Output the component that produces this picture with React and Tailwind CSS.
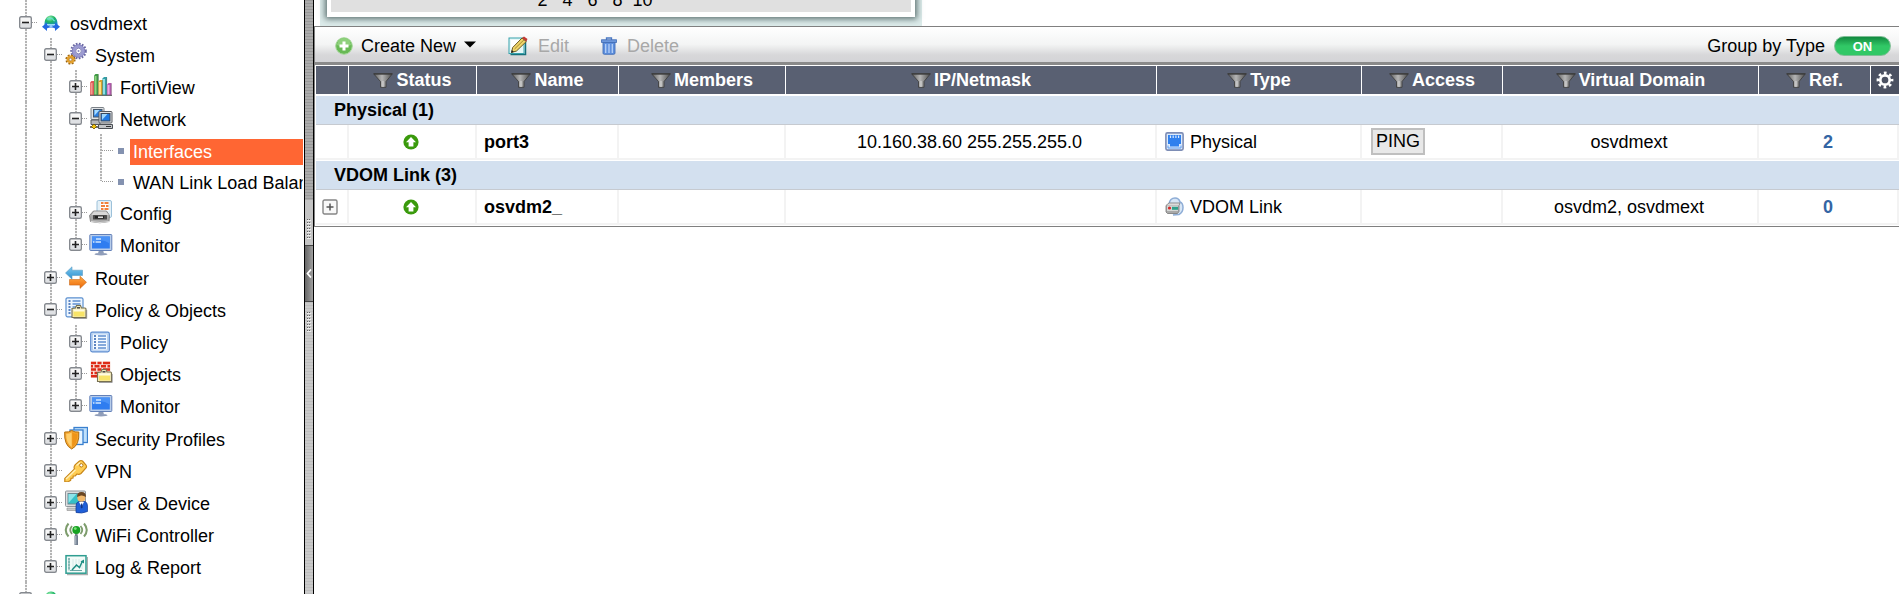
import React from "react";

/* ---------- Tree icons (24x24 boxes) ---------- */

function Svg({ children, w = 24, h = 24 }) {
  return (
    <svg width={w} height={h} viewBox={`0 0 ${w} ${h}`} className="shrink-0" aria-hidden="true">
      {children}
    </svg>
  );
}

function DomainIcon() {
  return (
    <Svg>
      <defs>
        <radialGradient id="globe" cx="0.4" cy="0.25" r="0.8">
          <stop offset="0" stopColor="#9df0b0" />
          <stop offset="0.45" stopColor="#1fb565" />
          <stop offset="1" stopColor="#1b86d8" />
        </radialGradient>
      </defs>
      <path d="M5.500 16C5 9 8 5.500 12 5.500S19 9 18.500 16Z" fill="url(#globe)" />
      <path d="M8 8.500c2 2 3-1 5 0s1 3 3 2" stroke="#5fe0d0" strokeWidth="1.200" fill="none" />
      <path d="M7 14h10v2.500l-5-1.500-5 1.500Z" fill="#a5dcf5" />
      <path d="M3 16.700 8 12.500v2.500c2 1.700 6 1.700 8 0v-2.500l5 4.200-5 4.200v-2.400c-2-1.200-6-1.200-8 0v2.400Z" fill="#2468e0" />
      <circle cx="12" cy="16" r="1.500" fill="#8fc6ff" />
    </Svg>
  );
}

function GearsIcon() {
  return (
    <Svg>
      <circle cx="14.500" cy="9" r="7.200" fill="none" stroke="#6a68a4" strokeWidth="2.200" strokeDasharray="1.700 1.400" />
      <circle cx="14.500" cy="9" r="4.700" fill="none" stroke="#9c9bd2" strokeWidth="3.600" />
      <circle cx="14.500" cy="9" r="6.300" fill="none" stroke="#7a79b4" strokeWidth="0.700" />
      <circle cx="14.500" cy="9" r="2.800" fill="#fff" stroke="#6a68a4" strokeWidth="0.800" />
      <circle cx="14.500" cy="9" r="1" fill="#8482bd" />
      <circle cx="6.500" cy="17.500" r="4" fill="none" stroke="#9c6410" strokeWidth="2.200" strokeDasharray="1.800 1.350" />
      <circle cx="6.500" cy="17.500" r="2.700" fill="none" stroke="#e3a02c" strokeWidth="2.400" />
      <circle cx="6.500" cy="17.500" r="1.300" fill="#fff" stroke="#9c6410" strokeWidth="0.700" />
    </Svg>
  );
}

function BarsIcon() {
  const bars = [
    [1, 7, "#e25858", "#f29a8e"],
    [5, 0, "#3f9a44", "#8fd480"],
    [9.500, 6, "#dba02a", "#ffdf80"],
    [13.500, 3, "#33a0a8", "#8edfe4"],
    [18, 9, "#b858b0", "#eeaae6"],
  ];
  return (
    <Svg>
      {bars.map(([x, y, dark, light]) => (
        <g key={x}>
          <path d={`M${x} ${y + 1.500}L${x + 1.500} ${y}h3V21.500h-4.500Z`} fill={dark} />
          <rect x={x + 0.500} y={y + 2} width="2" height={18.500 - y} fill={light} />
          <path d={`M${x + 4.200} ${y + 0.500}V21.500`} stroke="#666" strokeOpacity="0.500" strokeWidth="0.900" />
        </g>
      ))}
      <path d="M1 21.300h22" stroke="#555" strokeWidth="1" />
    </Svg>
  );
}

function NetworkIcon() {
  return (
    <Svg>
      <rect x="2" y="1.500" width="13" height="12" rx="1" fill="#e2e4e6" stroke="#7c8288" />
      <rect x="4.500" y="3.500" width="8.500" height="7.500" fill="#2a7ee0" stroke="#44566a" />
      <path d="m5.500 9.500 5-5.500h-5Z" fill="#a8dcff" />
      <path d="M2 14h9v4.500H2Z" fill="#b6b8ba" stroke="#55585c" />
      <rect x="10" y="5.500" width="13" height="11.500" rx="1" fill="#e2e4e6" stroke="#54585e" />
      <rect x="12" y="7.500" width="9" height="7.500" fill="#1e78e2" stroke="#38485c" />
      <path d="m13 14 5.500-6H13Z" fill="#9cd6ff" />
      <path d="M9.500 18.500h14v4h-14Z" fill="#c3c5c8" stroke="#4c5056" />
      <path d="M17 20.500h5" stroke="#333" />
      <path d="M1 21h8" stroke="#333" strokeWidth="1.400" />
      <path d="m2.500 20.500 2.500-2.500 2.500 2.500L5 23Z" fill="#f1c40f" stroke="#6b5200" strokeWidth="0.800" />
    </Svg>
  );
}

function ConfigIcon() {
  return (
    <Svg>
      <rect x="8" y="0.500" width="14.500" height="17" rx="1.500" fill="#e4f0f7" stroke="#9cc1da" />
      <rect x="11.500" y="2" width="8" height="9.500" fill="#fff" />
      <path d="M12 3h2.500M15.500 3h4M12 6h4M17 6h2.500M12 9h2.500M15.500 9h4" stroke="#f0803c" strokeWidth="1.800" />
      <path d="M4.500 11h13l3 4.500-.5 6q-9 2.500-18.500 0l-1-6Z" fill="#a8a8a8" stroke="#777" strokeWidth="0.800" />
      <path d="M5 11.500h12l3 3.500H2.500Z" fill="#d8d8d8" />
      <rect x="4" y="15" width="14" height="4.500" rx="0.500" fill="#4b4b4b" />
      <path d="M6 16h9v2.500H6Z" fill="#222" />
      <path d="M9 17.200h5" stroke="#ddd" strokeWidth="1.600" />
      <path d="M2 21.500q9 2 18 0" stroke="#ddd" fill="none" />
    </Svg>
  );
}

function MonitorIcon() {
  return (
    <Svg>
      <path d="M10 18h4l1 3.500H9Z" fill="#8d9cb8" />
      <ellipse cx="12" cy="22.200" rx="6.500" ry="1.300" fill="#8f9db9" />
      <rect x="0.800" y="2.500" width="22" height="16" rx="0.800" fill="#b8cdea" stroke="#6481b8" />
      <rect x="3" y="4.500" width="17.800" height="12" fill="#2f7df0" />
      <path d="M3 10.500q9-5 17.800 1V4.500H3Z" fill="#4a92f6" />
      <path d="M7 7h5M4 10h1.500M6.500 10H12" stroke="#cfe6ff" strokeWidth="1.500" />
    </Svg>
  );
}

function RouterIcon() {
  return (
    <Svg>
      <defs>
        <linearGradient id="lt" x1="0" y1="0" x2="0" y2="1">
          <stop offset="0" stopColor="#7cc8ee" />
          <stop offset="1" stopColor="#2c8fce" />
        </linearGradient>
        <linearGradient id="rt" x1="0" y1="0" x2="0" y2="1">
          <stop offset="0" stopColor="#ffac45" />
          <stop offset="1" stopColor="#ec6708" />
        </linearGradient>
      </defs>
      <path d="M1.500 8 8 1.800v3.400h10.500v5.300H8v3.700Z" fill="url(#lt)" stroke="#5d9cc4" strokeWidth="0.600" />
      <path d="M22.500 17.300 16 11.200v3.300H5.500v5.600H16v3.300Z" fill="url(#rt)" stroke="#c76a1c" strokeWidth="0.600" />
    </Svg>
  );
}

function ListLines({ x = 0, y = 0 }) {
  return (
    <g transform={`translate(${x} ${y})`}>
      <path d="M0 0h2M0 3h2M0 6h2M0 9h2M0 12h2" stroke="#2a5fae" strokeWidth="1.400" />
      <path d="M4 0h8M4 3h8M4 6h8M4 9h8M4 12h8" stroke="#5f8fd0" strokeWidth="1.300" />
    </g>
  );
}

function FolderShape({ x = 0, y = 0 }) {
  return (
    <g transform={`translate(${x} ${y})`}>
      <path d="M0.500 3.500 4 3l1-2.500h4L10 3h3.500q1 0 1 1v8.500h-14Z" fill="#f4ecc0" stroke="#77704f" strokeWidth="1.100" />
      <path d="M5.500 2.800h3" stroke="#444" strokeWidth="1.500" />
      <rect x="2" y="5" width="11" height="6.500" fill="#f8e468" />
      <path d="M2 5.500h11" stroke="#fffbe0" strokeWidth="2" />
      <path d="M15.200 5v8.500H2" stroke="#77777a" strokeOpacity="0.700" fill="none" />
    </g>
  );
}

function PolicyObjectsIcon() {
  return (
    <Svg>
      <rect x="2" y="0.800" width="17" height="19" rx="1.500" fill="#eef6ff" stroke="#5b8fcf" strokeWidth="1.200" />
      <ListLines x={4.500} y={4} />
      <FolderShape x={7.500} y={8} />
    </Svg>
  );
}

function PolicyIcon() {
  return (
    <Svg>
      <rect x="1.700" y="3.200" width="18.600" height="19.600" rx="1.500" fill="#cfe2f8" stroke="#5b8bcf" strokeWidth="1.200" />
      <rect x="3.500" y="5" width="15" height="16" fill="#f4faff" stroke="#9fc0e8" strokeWidth="0.600" />
      <ListLines x={5} y={7} />
    </Svg>
  );
}

function ObjectsIcon() {
  return (
    <Svg>
      <rect x="1.500" y="0.500" width="20" height="16" fill="#f7dcd4" />
      <path d="M2 2h5M8.500 2h4M14 2h7M2 5.300h2M5.500 5.300h5M12 5.300h5M18.500 5.300h2.500M2 8.600h5M8.500 8.600h4M14 8.600h7M2 11.900h2M5.500 11.900h5M2 15.200h6" stroke="#dd2a16" strokeWidth="2.500" />
      <FolderShape x={8} y={8} />
    </Svg>
  );
}

function SecurityIcon() {
  return (
    <Svg>
      <rect x="10" y="1.500" width="13.500" height="15" fill="#bfe0fb" stroke="#3a80cf" strokeWidth="1.300" />
      <rect x="6" y="4" width="13" height="14.500" fill="#e8f5ff" stroke="#3a80cf" strokeWidth="1.300" />
      <path d="M7.700 4.500q-3 2-7 1.500Q-0.200 19 7.700 23 15.700 19 14.800 6q-4 .5-7.100-1.500Z" fill="#f5a52e" stroke="#b3700f" strokeWidth="1" />
      <path d="M7.700 6.500q-2.700 1.500-5.500 1.300Q2 17 7.700 21Z" fill="#ffcf6d" />
      <path d="M8.300 6.500q2.700 1.500 5 1.300Q13.700 17 8.300 21Z" fill="#ee9418" />
    </Svg>
  );
}

function KeyIcon() {
  return (
    <Svg>
      <path d="M11 7 15.500 3q1.500-1 3 0l3.500 4q1 1.500 0 3l-5 5.500q-2 1.500-4 .5l-1.800 1.800-2 .2-.2 2-2 .3-.4 2-2 1.200-3.800.5L.800 20.500 10.500 11q-1-2 .5-4Z" fill="#ffce55" stroke="#c98718" strokeWidth="1.200" />
      <path d="M12.500 7.500 16 4.500M2 21l9.500-9.200" stroke="#fff0b8" strokeWidth="1.500" />
      <circle cx="17.300" cy="7.300" r="1.700" fill="#fff" stroke="#b87812" />
    </Svg>
  );
}

function UserIcon() {
  return (
    <Svg>
      <rect x="1.500" y="1" width="20" height="15.500" rx="1" fill="#dcdedf" stroke="#8f959b" />
      <rect x="4" y="3.500" width="13" height="10.500" fill="#35bfc6" stroke="#6c8892" />
      <path d="m4.500 13 8-9h-8Z" fill="#8ce4e8" />
      <path d="M3 18h9v2.500H3Z" fill="#c6c8ca" stroke="#999" strokeWidth="0.700" />
      <path d="M12 22.500V16q0-4 3-4.500h6q2.500 1 2.500 4.500v5.500q-6 2.500-11.500 1Z" fill="#1f5fd8" stroke="#123a92" strokeWidth="0.700" />
      <path d="m15 12 2.500 4.500L20 12Z" fill="#fff" />
      <path d="M17.200 13.500h1l.5 4-1 1-1-1Z" fill="#16357e" />
      <circle cx="17.300" cy="7.800" r="4" fill="#f1b96d" />
      <path d="M13 7q0-5 4.500-5T22 7q-3-2-5-1.500T13 7Z" fill="#6a4622" />
    </Svg>
  );
}

function WifiIcon() {
  return (
    <Svg>
      <path d="M4.500 1.500Q-1 8 4.500 14.500M20 1.500q5.500 6.500 0 13" stroke="#7d9c6c" strokeWidth="2" fill="none" />
      <path d="M8 4q-3.500 4 0 8M16.500 4q3.500 4 0 8" stroke="#7d9c6c" strokeWidth="1.800" fill="none" />
      <path d="M11 10.500h2.600V14H11Z" fill="#79838c" />
      <rect x="10.500" y="13.500" width="3.500" height="9.500" fill="#6f7c8e" />
      <path d="M11.800 14v8.500" stroke="#b5c0cc" />
      <circle cx="12.300" cy="8" r="4" fill="#17a323" />
      <circle cx="11.300" cy="6.600" r="1.400" fill="#7de07a" />
    </Svg>
  );
}

function LogIcon() {
  return (
    <Svg>
      <path d="M3 20.500h20.500V3" stroke="#777" strokeOpacity="0.600" strokeWidth="1.400" fill="none" />
      <rect x="2" y="1.700" width="20" height="17.500" fill="#f2fbf8" stroke="#2f9d91" strokeWidth="1.500" />
      <path d="M5 4v12.500M4 5h2M4 8h2M4 11h2M4 14h2M6 16.500h12" stroke="#5b9c9a" strokeWidth="0.900" />
      <path d="M9 5v9M12 5v9M15 5v5M18 10v5" stroke="#cfe6e2" strokeWidth="0.800" />
      <path d="m8 16 4.500-5 3 2.500L18.500 7" stroke="#1d8d82" strokeWidth="1.500" fill="none" />
      <path d="m16.500 7.500 3.500-2v4Z" fill="#1d8d82" />
    </Svg>
  );
}

/* ---------- Tree ---------- */

const tree = [
  {
    label: "osvdmext",
    Icon: DomainIcon,
    children: [
      {
        label: "System",
        Icon: GearsIcon,
        children: [
          { label: "FortiView", Icon: BarsIcon },
          {
            label: "Network",
            Icon: NetworkIcon,
            children: [
              { label: "Interfaces", leaf: true, selected: true },
              { label: "WAN Link Load Balancing", leaf: true },
            ],
          },
          { label: "Config", Icon: ConfigIcon },
          { label: "Monitor", Icon: MonitorIcon },
        ],
      },
      { label: "Router", Icon: RouterIcon },
      {
        label: "Policy & Objects",
        Icon: PolicyObjectsIcon,
        children: [
          { label: "Policy", Icon: PolicyIcon },
          { label: "Objects", Icon: ObjectsIcon },
          { label: "Monitor", Icon: MonitorIcon },
        ],
      },
      { label: "Security Profiles", Icon: SecurityIcon },
      { label: "VPN", Icon: KeyIcon },
      { label: "User & Device", Icon: UserIcon },
      { label: "WiFi Controller", Icon: WifiIcon },
      { label: "Log & Report", Icon: LogIcon },
    ],
  },
  { label: "", Icon: DomainIcon },
];

const dotsV = "w-[2px] bg-[repeating-linear-gradient(to_bottom,#b4b4b4_0_2px,#f4f4f4_2px_3px)]";
const dotsH = "h-[1px] bg-[repeating-linear-gradient(to_right,#999_0_1px,#fff_1px_2px)]";

function Guides({ guides }) {
  return guides.map((on, i) => (
    <span key={i} className="flex w-[25px] shrink-0 justify-center self-stretch">
      {on && <span className={dotsV} />}
    </span>
  ));
}

function Expander({ open, name }) {
  return (
    <button
      type="button"
      aria-label={`${open ? "Collapse" : "Expand"} ${name}`}
      className="block size-[13px] shrink-0"
    >
      <svg width="13" height="13" viewBox="0 0 13 13">
        <rect x="0.700" y="0.700" width="11.600" height="11.600" rx="1.500" fill="#f6f6f6" stroke="#85898f" strokeWidth="1.400" />
        <path d="M2 7h9v4H2Z" fill="#dfe1e4" />
        <path d={open ? "M3 6.500h7" : "M3 6.500h7M6.500 3v7"} stroke="#222" strokeWidth="1.600" />
      </svg>
    </button>
  );
}

function TreeNode({ node, guides, last }) {
  if (node.leaf) {
    return (
      <li className="flex h-[31px] items-end">
        <Guides guides={guides} />
        <span className="flex w-[25px] shrink-0 self-stretch pl-3">
          <span className={`${dotsV} ${last ? "h-4" : "h-full"}`} />
          <span className={`mt-4 w-[11px] ${dotsH}`} />
        </span>
        <span className="flex w-[17px] shrink-0 self-stretch pt-[14px] pl-[5px]">
          <span className="size-[6px] bg-[#8492b0]" />
        </span>
        <a
          href="#interfaces"
          className={`h-[26px] grow pl-[3px] text-lg leading-[26px] whitespace-nowrap ${
            node.selected ? "bg-[#ff6633] text-white" : "text-black"
          }`}
        >
          {node.label}
        </a>
      </li>
    );
  }
  const { Icon } = node;
  return (
    <li>
      <div className="flex h-8 items-center">
        <Guides guides={guides} />
        <span className="flex w-[25px] shrink-0 items-center self-stretch pl-[6px]">
          <span className="flex h-full w-[13px] flex-col items-center">
            <span className={`grow ${dotsV}`} />
            <Expander open={!!node.children} name={node.label} />
            <span className={`flex-1 ${last ? "" : dotsV}`} />
          </span>
          <span className={`w-[6px] ${dotsH}`} />
        </span>
        <span className="w-8 shrink-0 pl-[1px]">
          <Icon />
        </span>
        <a href="#node" className="pt-1 text-lg leading-7 whitespace-nowrap text-black">
          {node.label}
        </a>
      </div>
      {node.children && (
        <ul>
          {node.children.map((child, i) => (
            <TreeNode
              key={i}
              node={child}
              guides={[...guides, !last]}
              last={i === node.children.length - 1}
            />
          ))}
          {guides.length === 1 && (
            <li aria-hidden="true" className="flex h-[1px]">
              <Guides guides={[true, true]} />
            </li>
          )}
        </ul>
      )}
    </li>
  );
}

function Sidebar() {
  return (
    <nav aria-label="Navigation" className="w-[303px] shrink-0 overflow-hidden pl-[13px]">
      <div className="flex h-[6px]">
        <Guides guides={[true]} />
      </div>
      <ul>
        {tree.map((node, i) => (
          <TreeNode key={i} node={node} guides={[]} last={i === tree.length - 1} />
        ))}
      </ul>
    </nav>
  );
}

function Grip() {
  return (
    <svg width="4" height="21" viewBox="0 0 4 21" aria-hidden="true">
      <path d="M0 0.500h4M0 3.500h4M0 6.500h4M0 9.500h4M0 12.500h4M0 15.500h4M0 18.500h4" stroke="#666" strokeDasharray="1 1" />
      <path d="M0 1.500h4M0 4.500h4M0 7.500h4M0 10.500h4M0 13.500h4M0 16.500h4M0 19.500h4" stroke="#eee" />
    </svg>
  );
}

function Splitter() {
  return (
    <div className="ml-[1px] flex w-[10px] shrink-0 flex-col items-stretch border-x border-black bg-[repeating-linear-gradient(to_bottom,#989898_0_1px,#ababab_1px_3px)]">
      <div className="h-[200px] shrink-0" />
      <div className="flex h-[45px] shrink-0 items-end justify-center bg-[#c4c4c4] pb-[5px]">
        <Grip />
      </div>
      <button
        type="button"
        aria-label="Hide navigation"
        className="flex h-[57px] shrink-0 items-center justify-center border-y border-[#444] bg-linear-to-r from-[#666] to-[#a0a0a0]"
      >
        <svg width="6" height="9" viewBox="0 0 6 9">
          <path d="M5 0.500 1.500 4.500 5 8.500" stroke="#fff" strokeWidth="1.800" fill="none" />
        </svg>
      </button>
      <div className="flex grow items-start justify-center bg-[repeating-linear-gradient(to_bottom,#bdbdbd_0_1px,#c9c9c9_1px_3px)] pt-[10px]">
        <Grip />
      </div>
    </div>
  );
}

/* ---------- Toolbar ---------- */

function AddIcon() {
  return (
    <Svg w={18} h={18}>
      <circle cx="9" cy="9" r="8.300" fill="#68b955" stroke="#a5d899" />
      <path d="M2 8a7 7 0 0 1 14 0q-7 3-14 0Z" fill="#8ed07c" />
      <path d="M9 4.500v9M4.500 9h9" stroke="#fff" strokeWidth="3" />
    </Svg>
  );
}

function EditIcon() {
  return (
    <Svg w={20} h={20}>
      <path d="M2.500 18.500h15V4" stroke="#17707c" strokeWidth="1.500" fill="none" />
      <rect x="1" y="2" width="15" height="15.500" fill="#e6f7f7" stroke="#35a2ac" />
      <path d="M3 4h9L3 13Z" fill="#fff" />
      <path d="m3.500 16.500 1.200-5L14 2l4.300 3.500L8.500 15Z" fill="#f0d56a" stroke="#6c5a22" strokeWidth="1" />
      <path d="M6.500 13 16 3.800" stroke="#a58a30" />
      <path d="m14 2 2-1.500L19.500 3l-1.200 2.500Z" fill="#c33a34" />
      <path d="m3 17 .8-3 2 1.800Z" fill="#222" />
    </Svg>
  );
}

function TrashIcon() {
  return (
    <Svg w={16} h={18}>
      <path d="M5.500 3V1h5v2" fill="none" stroke="#4a78c2" strokeWidth="1.300" />
      <rect x="0.600" y="2.800" width="14.800" height="2.600" fill="#6f9ade" stroke="#446fb8" strokeWidth="0.900" />
      <path d="M2 5.500h12V16q0 1.300-1.300 1.300H3.300Q2 17.300 2 16Z" fill="#5f90de" stroke="#446fb8" strokeWidth="0.900" />
      <path d="M4.700 7v9M8 7v9M11.300 7v9" stroke="#b5d0f7" strokeWidth="1.300" />
    </Svg>
  );
}

function Toolbar() {
  return (
    <div className="flex h-[39px] items-center border-t border-b-[3px] border-t-[#808080] border-b-[#8a8a8a] bg-[linear-gradient(to_bottom,#fff_0%,#f3f4f4_50%,#d7d7d9_80%,#d4d4d7_100%)] pt-[2px] pr-2 pl-5 text-lg leading-6">
      <button type="button" className="flex items-center text-black">
        <AddIcon />
        <span className="ml-2">Create New</span>
        <svg width="12" height="7" viewBox="0 0 12 7" className="mb-[3px] ml-2" aria-hidden="true">
          <path d="M0 0.500h12L6 6.500Z" fill="#000" />
        </svg>
      </button>
      <button type="button" disabled className="ml-8 flex items-center text-[#a8a8a8]">
        <EditIcon />
        <span className="ml-[10px]">Edit</span>
      </button>
      <button type="button" disabled className="ml-8 flex items-center text-[#a8a8a8]">
        <TrashIcon />
        <span className="ml-[10px]">Delete</span>
      </button>
      <div className="grow" />
      <label htmlFor="group-by-type">Group by Type</label>
      <button
        id="group-by-type"
        type="button"
        role="switch"
        aria-checked="true"
        className="ml-[9px] flex h-5 w-[57px] items-center justify-center rounded-full border border-[#7fbf96] bg-linear-to-b from-[#128a40] to-[#31c866] to-50% pt-[3px] text-[13px] leading-4 font-bold text-white"
      >
        ON
      </button>
    </div>
  );
}

/* ---------- Table ---------- */

function Funnel() {
  return (
    <svg width="20" height="15" viewBox="0 0 20 15" className="shrink-0" aria-hidden="true">
      <defs>
        <linearGradient id="funnel" x1="0" y1="0" x2="1" y2="0">
          <stop offset="0" stopColor="#5c5c5c" />
          <stop offset="0.450" stopColor="#b4b4b4" />
          <stop offset="1" stopColor="#4a4a4a" />
        </linearGradient>
      </defs>
      <path d="M0.500 0.700h19L13 8.500V14.300H7.500V8.500Z" fill="url(#funnel)" stroke="#3f3f3f" strokeWidth="0.900" />
      <path d="M1 1h18" stroke="#3a3a3a" strokeWidth="1.200" />
      <path d="M10 8v6" stroke="#d0d0d0" strokeWidth="1.300" />
    </svg>
  );
}

function GearIcon() {
  return (
    <svg width="18" height="18" viewBox="0 0 18 18" aria-hidden="true">
      <circle cx="9" cy="9" r="7" fill="none" stroke="#fff" strokeWidth="2.800" strokeDasharray="2.700 2.798" strokeDashoffset="1.350" />
      <circle cx="9" cy="9" r="4.700" fill="none" stroke="#fff" strokeWidth="2.700" />
    </svg>
  );
}

function UpIcon() {
  return (
    <svg width="16" height="16" viewBox="0 0 16 16" className="mx-auto" role="img" aria-label="Up">
      <circle cx="8" cy="8" r="7.600" fill="#3a9a0c" />
      <path d="M8 3 13 8.200h-2.600V12.500H5.600V8.200H3Z" fill="#fff" />
    </svg>
  );
}

function PortIcon() {
  return (
    <Svg w={19} h={19}>
      <rect x="0.900" y="0.900" width="17.200" height="17.200" rx="1.500" fill="#dceafb" stroke="#7d8db5" strokeWidth="1.600" />
      <path d="M3 3h13v9h-2v2.500H5V12H3Z" fill="#2f80ee" />
      <path d="M5.500 3.500v2.500M8.200 3.500v2.500M10.900 3.500v2.500M13.600 3.500v2.500" stroke="#d6e8ff" strokeWidth="1.200" />
      <path d="M3 13.500v2.500h13v-2.500" stroke="#5f9cf0" strokeWidth="1" fill="none" />
    </Svg>
  );
}

function VdomIcon() {
  return (
    <Svg w={19} h={19}>
      <path d="M4 7Q5 1 10 1q4 0 5 4 3 1 3 5.500 0 5-4 7l-6 .5" fill="#d8e6f5" stroke="#8eadd6" strokeWidth="1.500" />
      <path d="M1 8.500 4 6h11l-1 2.500v6L12.500 16.500H2.500L1 15Z" fill="#a9a9a9" stroke="#777" strokeWidth="0.800" />
      <path d="M1.500 8.500 4 6.500h10.500L13.500 8.500Z" fill="#dcdcdc" />
      <rect x="2" y="9" width="11" height="5" fill="#d5d8d6" />
      <circle cx="4.500" cy="11" r="1.600" fill="#d62828" />
      <rect x="7" y="9.800" width="6" height="3" fill="#2fa08a" />
    </Svg>
  );
}

const columns = ["Status", "Name", "Members", "IP/Netmask", "Type", "Access", "Virtual Domain", "Ref."];

const groups = [
  {
    title: "Physical (1)",
    rows: [
      {
        name: "port3",
        ip: "10.160.38.60 255.255.255.0",
        type: "Physical",
        TypeIcon: PortIcon,
        access: "PING",
        vdom: "osvdmext",
        refs: "2",
      },
    ],
  },
  {
    title: "VDOM Link (3)",
    rows: [
      {
        expandable: true,
        name: "osvdm2_",
        type: "VDOM Link",
        TypeIcon: VdomIcon,
        vdom: "osvdm2, osvdmext",
        refs: "0",
      },
    ],
  },
];

const cell = "h-[35px] border-r-2 border-b-2 border-[#f3f3f3] py-0 leading-6";

function Row({ row }) {
  return (
    <tr>
      <td className={`${cell} pr-[3px] pl-0`}>
        {row.expandable && (
          <button type="button" aria-label="Expand osvdm2_" className="mx-auto block size-4">
            <svg width="16" height="16" viewBox="0 0 16 16">
              <rect x="1" y="1" width="14" height="14" rx="1.500" fill="#f8f8f8" stroke="#858585" strokeWidth="1.400" />
              <path d="M4.500 8h7M8 4.500v7" stroke="#555" strokeWidth="1.500" />
            </svg>
          </button>
        )}
      </td>
      <td className={`${cell} pr-[3px] pl-0`}>
        <UpIcon />
      </td>
      <td className={`${cell} pr-0 pl-[7px] font-bold`}>{row.name}</td>
      <td className={cell} />
      <td className={`${cell} pr-[2px] pl-0 text-center`}>{row.ip}</td>
      <td className={`${cell} pr-0 pl-2`}>
        <span className="flex items-center gap-[6px]">
          <row.TypeIcon />
          <span>{row.type}</span>
        </span>
      </td>
      <td className={`${cell} pr-0 pl-[9px]`}>
        {row.access && (
          <span className="inline-block border-2 border-[#bfbfbf] bg-[#e8e8e8] px-[3px] leading-[23px]">
            {row.access}
          </span>
        )}
      </td>
      <td className={`${cell} pr-[2px] pl-0 text-center`}>{row.vdom}</td>
      <td colSpan={2} className={`${cell} px-0 text-center font-bold`}>
        <a href="#refs" className="text-[#3465a4]">
          {row.refs}
        </a>
      </td>
    </tr>
  );
}

function InterfacesTable() {
  return (
    <table className="w-full table-fixed border-separate border-spacing-0 border-b border-[#808080] pt-[1px] pb-[1px] pl-[1px] text-lg">
      <colgroup>
        <col className="w-[33px]" />
        <col className="w-[128px]" />
        <col className="w-[142px]" />
        <col className="w-[167px]" />
        <col />
        <col className="w-[205px]" />
        <col className="w-[141px]" />
        <col className="w-[256px]" />
        <col className="w-[112px]" />
        <col className="w-[28px]" />
      </colgroup>
      <thead>
        <tr>
          <th aria-label="Expand" className="h-[29px] border-r border-b border-white bg-[#596072] p-0" />
          {columns.map((c) => (
            <th key={c} scope="col" className="h-[29px] border-r border-b border-white bg-[#596072] p-0 font-bold text-white">
              <span className="flex items-center justify-center gap-[3px] leading-6">
                <Funnel />
                {c}
              </span>
            </th>
          ))}
          <th className="h-[29px] border-b border-white bg-[#4b5162] p-0">
            <button type="button" aria-label="Column settings" className="flex w-full items-center justify-center">
              <GearIcon />
            </button>
          </th>
        </tr>
      </thead>
      {groups.map((g) => (
        <tbody key={g.title}>
          <tr>
            <th
              scope="rowgroup"
              colSpan={10}
              className="h-[30px] border-t border-b border-t-white border-b-[#c6cad0] bg-[#d3e0ef] pt-0 pr-0 pb-[1px] pl-[18px] text-left leading-6 font-bold"
            >
              {g.title}
            </th>
          </tr>
          {g.rows.map((r) => (
            <Row key={r.name} row={r} />
          ))}
        </tbody>
      ))}
    </table>
  );
}

/* Bottom edge of the device faceplate with its port numbers. */
function Faceplate() {
  return (
    <div className="-mt-[10px] ml-[6px] w-[602px] max-w-full bg-[#dcebea] px-[7px] pb-[9px]">
      <div className="border-4 border-t-0 border-b-[5px] border-white bg-[#e0e0e0] shadow-[0_0_6px_2px_#5c7070]">
        <div className="flex h-[22px] pl-[199px] text-lg leading-5">
          {["2", "4", "6", "8", "10"].map((n) => (
            <span key={n} className="w-[25px] text-center">
              {n}
            </span>
          ))}
        </div>
      </div>
    </div>
  );
}

export default function App() {
  return (
    <div className="flex h-screen overflow-hidden bg-white font-['Liberation_Sans',Arial,sans-serif] text-black">
      <Sidebar />
      <Splitter />
      <main className="min-w-0 grow overflow-hidden">
        <Faceplate />
        <section aria-label="Interfaces" className="border-l border-[#808080]">
          <Toolbar />
          <InterfacesTable />
        </section>
      </main>
    </div>
  );
}
